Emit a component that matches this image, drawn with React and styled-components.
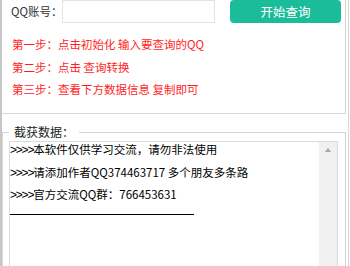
import React from "react";
import styled, { createGlobalStyle } from "styled-components";

const Global = createGlobalStyle`
  html, body { margin: 0; padding: 0; background: #fff; }
  body { font-family: "Noto Sans CJK SC", "Noto Sans", sans-serif; }
  * { box-sizing: border-box; }
`;

const Window = styled.div`
  width: 349px;
  height: 266px;
  overflow: hidden;
  border-left: 2px solid #c6c6c6;
  border-right: 1px solid #d8d8d8;
  display: flex;
  flex-direction: column;
  align-items: flex-start;
`;

const TopPanel = styled.div`
  flex-shrink: 0;
  width: 344px;
  height: 114px;
  border-right: 1px solid #d6d6d6;
  border-bottom: 1px solid #d6d6d6;
  padding: 0 0 0 9px;
  display: flex;
  flex-direction: column;
`;

const InputRow = styled.div`
  display: flex;
  align-items: center;
  height: 23px;
`;

const Label = styled.span`
  width: 51px;
  font-size: 11.5px;
  color: #333;
  line-height: 23px;
  white-space: nowrap;
`;

const Input = styled.div`
  width: 153px;
  height: 23px;
  border: 1px solid #e2e2e2;
  background: #fff;
`;

const Button = styled.button`
  margin-left: 15px;
  width: 111px;
  height: 23px;
  border: none;
  border-radius: 4px;
  background: #1bbc9a;
  color: #fff;
  font-family: "Noto Sans CJK SC", sans-serif;
  font-size: 12.5px;
  padding: 0;
  line-height: 23px;
`;

const Steps = styled.div`
  padding: 10px 0 0 1px;
  display: flex;
  flex-direction: column;
`;

const Step = styled.div`
  color: #ff1e1e;
  font-size: 11.5px;
  line-height: 22.5px;
  white-space: nowrap;
`;

const Group = styled.fieldset`
  flex-shrink: 0;
  margin: 10px 0 0 0;
  width: 344px;
  border: 1px solid #d6d6d6;
  border-bottom: none;
  padding: 1px 7px 0 6px;
  min-inline-size: 0;
`;

const Legend = styled.legend`
  padding: 0 5px;
  font-size: 12px;
  line-height: 16px;
  color: #222;
`;

const LogBox = styled.div`
  width: 329px;
  height: 140px;
  border: 1px solid #dcdcdc;
  display: flex;
`;

const LogContent = styled.div`
  flex: 1;
  display: flex;
  flex-direction: column;
`;

const LogLine = styled.div`
  font-size: 11.5px;
  line-height: 14px;
  height: 14px;
  margin-bottom: 8.5px;
  color: #000;
  white-space: nowrap;
  &:last-of-type { margin-bottom: 0; }
`;

const Chev = styled.span`
  font-family: "Liberation Sans", sans-serif;
  font-size: 12px;
  letter-spacing: -1.2px;
`;

const Rule = styled.div`
  width: 184px;
  height: 1px;
  background: #000;
  margin-top: 4px;
`;

const Scrollbar = styled.div`
  width: 18px;
  background: #f0f0f0;
  display: flex;
  justify-content: center;
  padding-top: 6px;
`;

const Arrow = styled.div`
  width: 0;
  height: 0;
  border-left: 3.5px solid transparent;
  border-right: 3.5px solid transparent;
  border-bottom: 4px solid #a6a6a6;
`;

const lines = [
  "本软件仅供学习交流，请勿非法使用",
  "请添加作者QQ374463717 多个朋友多条路",
  "官方交流QQ群：766453631",
];

export default function App() {
  return (
    <>
      <Global />
      <Window>
        <TopPanel>
          <InputRow>
            <Label>QQ账号：</Label>
            <Input />
            <Button>开始查询</Button>
          </InputRow>
          <Steps>
            <Step>第一步：点击初始化 输入要查询的QQ</Step>
            <Step>第二步：点击 查询转换</Step>
            <Step>第三步：查看下方数据信息 复制即可</Step>
          </Steps>
        </TopPanel>
        <Group>
          <Legend>截获数据：</Legend>
          <LogBox>
            <LogContent>
              {lines.map((t) => (
                <LogLine key={t}>
                  <Chev>&gt;&gt;&gt;&gt;</Chev>
                  {t}
                </LogLine>
              ))}
              <Rule />
            </LogContent>
            <Scrollbar>
              <Arrow />
            </Scrollbar>
          </LogBox>
        </Group>
      </Window>
    </>
  );
}
